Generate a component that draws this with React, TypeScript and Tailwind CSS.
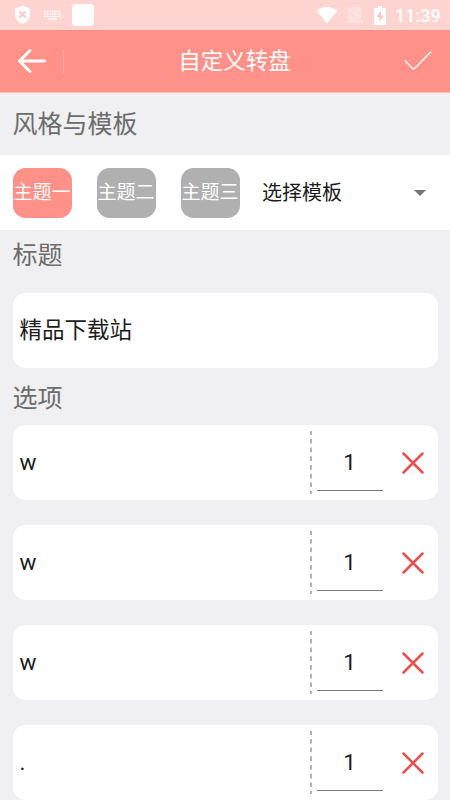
import React from "react";
import clsx from "clsx";

const themes = ["主题一", "主题二", "主题三"];

const options = [
  { text: "w", weight: 1 },
  { text: "w", weight: 1 },
  { text: "w", weight: 1 },
  { text: ".", weight: 1 },
];

const StatusBar = () => (
  <div className="flex h-[30px] items-center bg-[#ffd4d1] pl-[15px] pr-[10px] text-white">
    <svg width="16" height="20" viewBox="0 0 16 20">
      <path d="M7.5 0.8 15 3.6v6c0 4.200-3.200 7.800-7.500 9.400C3.200 17.400 0 13.800 0 9.600v-6z" fill="#fff" />
      <path d="m4.500 6.500 6 6m0-6-6 6" stroke="#ffc9c5" strokeWidth="2" />
    </svg>
    <svg className="ml-[13px]" width="18" height="10" viewBox="0 0 18 10">
      <path d="M0 1.500h17M0 4h17M0 6.500h17" stroke="#fff" strokeWidth="1.600" strokeDasharray="1.700 0.850" />
      <path d="M4 9h9" stroke="#fff" strokeWidth="1.500" />
    </svg>
    <div className="ml-[10px] h-[22px] w-[22px] rounded-[4px] bg-white" />
    <svg className="ml-auto" width="22" height="18" viewBox="0 0 22 18">
      <path d="M11 17.500 0.500 4.500C6.500-0.300 15.500-0.300 21.500 4.500z" fill="#fff" />
    </svg>
    <svg className="ml-[8px]" width="17" height="18" viewBox="0 0 17 18">
      <path d="M6 1h9v16H2V5z" fill="#fff" opacity="0.350" />
      <path d="m0 2 15.500 15" stroke="#ffd4d1" strokeWidth="3" />
      <path d="m0.500 1.500 15.500 15" stroke="#fff" strokeWidth="1.200" opacity="0.500" />
    </svg>
    <svg className="ml-[11px]" width="12" height="19" viewBox="0 0 12 19">
      <path d="M4 0h4v2h4v17H0V2h4z" fill="#fff" />
      <path d="M7 4.500 2.500 11H5.500V16L9.500 9.500H6.800z" fill="#ffc3be" />
    </svg>
    <span className="ml-[9px] w-[45px] whitespace-nowrap pt-px text-[18px] font-medium leading-none">11:39</span>
  </div>
);

const Header = () => (
  <div className="flex h-[63px] items-center border-b border-[#ffc0bb] bg-[#ff9189] pl-[17px] pr-[18px] text-white">
    <svg width="30" height="26" viewBox="0 0 30 26" fill="none" stroke="#fff" strokeWidth="3" strokeLinecap="round" strokeLinejoin="round">
      <path d="M27.500 13H3M13 2.500 2.500 13 13 23.500" />
    </svg>
    <div className="ml-4 h-6 w-px bg-[#ffaba5]" />
    <h1 className="flex-1 pl-[1px] text-center text-[22.500px] leading-none">自定义转盘</h1>
    <svg width="28" height="20" viewBox="0 0 28 20" fill="none" stroke="#fff" strokeWidth="1.400">
      <path d="m0.800 9.500 7.800 8q1 1 2 0L27 0.800" />
    </svg>
  </div>
);

const Label = ({ className, children }: { className: string; children: React.ReactNode }) => (
  <div className={clsx("flex items-center px-[12.500px] text-[25px] leading-none text-[#6c6c6c]", className)}>
    {children}
  </div>
);

const OptionRow = ({ text, weight }: { text: string; weight: number }) => (
  <div className="flex h-[75px] shrink-0 rounded-[12.500px] bg-white">
    <div className="flex w-[297px] items-center pl-[7px] pt-px text-[22.500px] text-[#1c1c1c]">{text}</div>
    <svg className="mt-[5.500px]" width="2" height="63" viewBox="0 0 2 63">
      <path d="M1 0v63" stroke="#8c8c8c" strokeWidth="1.300" strokeDasharray="4.700 4" strokeDashoffset="0.800" />
    </svg>
    <div className="ml-[5px] mt-[5px] flex h-[60.500px] w-[66px] items-center justify-center border-b border-[#777] pt-[7px] text-[22.500px] text-[#1c1c1c]">
      {weight}
    </div>
    <svg className="ml-[19px] mt-[26.500px]" width="22" height="22" viewBox="0 0 22 22">
      <path d="m1.500 1.500 19 19m0-19-19 19" stroke="#e9504f" strokeWidth="2.500" strokeLinecap="round" />
    </svg>
  </div>
);

const App = () => {
  return (
    <div className="flex h-[800px] w-[450px] flex-col overflow-hidden bg-[#f0f0f3] font-[Roboto,'Noto_Sans_CJK_SC',sans-serif]">
      <StatusBar />
      <Header />
      <Label className="h-[62px]">风格与模板</Label>
      <div className="flex h-[75px] items-center bg-white pl-[12.500px]">
        <div className="flex gap-[25px]">
          {themes.map((theme, i) => (
            <div
              key={theme}
              className={clsx(
                "flex h-[50px] w-[59px] items-center justify-center whitespace-nowrap rounded-[12.500px] text-[19px] leading-none text-white",
                i === 0 ? "bg-[#ff9189]" : "bg-[#b0b0b0]"
              )}
            >
              {theme}
            </div>
          ))}
        </div>
        <span className="ml-[22.500px] text-[20px] leading-none text-[#1c1c1c]">选择模板</span>
        <svg className="ml-auto mr-6" width="12" height="6" viewBox="0 0 12 6">
          <path d="M0 0h12L6 6z" fill="#757575" />
        </svg>
      </div>
      <Label className="h-[50px]">标题</Label>
      <div className="mx-[12.500px] mt-[12.500px] flex h-[75px] items-center rounded-[12.500px] bg-white pl-[7px] text-[22.500px] leading-none text-[#1c1c1c]">
        精品下载站
      </div>
      <Label className="mt-[5px] h-[52.500px]">选项</Label>
      <div className="mx-[12.500px] flex flex-col gap-[25px]">
        {options.map((option, i) => (
          <OptionRow key={i} text={option.text} weight={option.weight} />
        ))}
      </div>
    </div>
  );
};

export default App;
